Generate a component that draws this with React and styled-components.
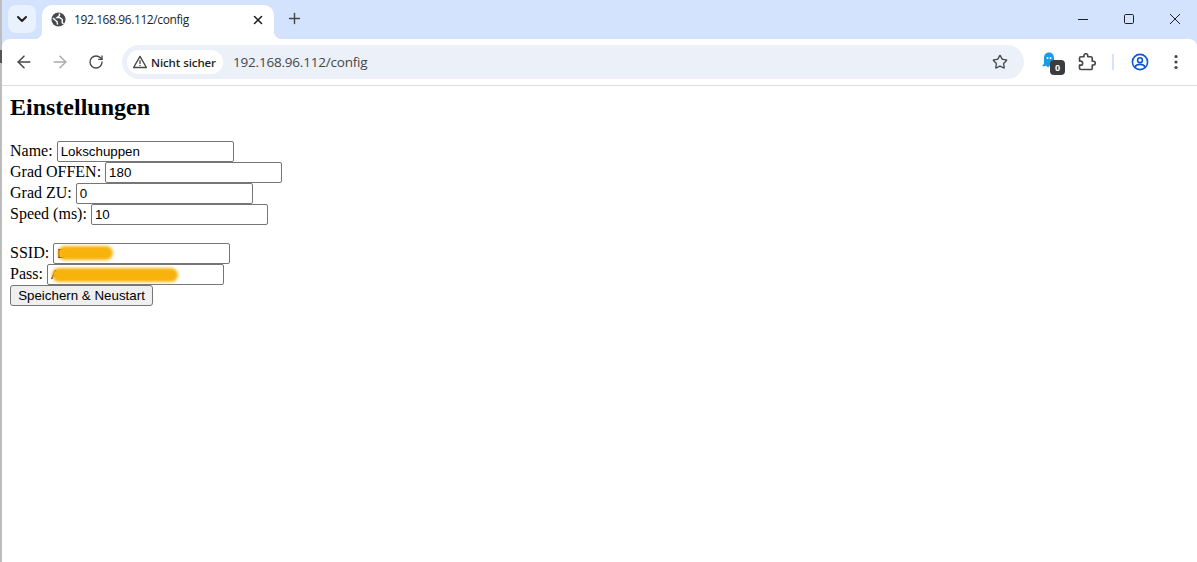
import styled, { createGlobalStyle } from "styled-components";
import { ArrowLeft, ArrowRight, RotateCw, ChevronDown, X, Plus, Star } from "lucide-react";

const GlobalStyle = createGlobalStyle`
  html, body {
    margin: 0;
    height: 100%;
    background: #fff;
    overflow: hidden;
  }
  #root {
    height: 100%;
  }
`;

const Window = styled.div`
  position: relative;
  height: 562px;
  box-sizing: border-box;
  display: flex;
  flex-direction: column;
  background: #d3e3fd;
  border-left: 2px solid #bdbdbd;
  font-family: "Open Sans", "Noto Sans", sans-serif;
  color: #1f1f1f;

  &::before {
    content: "";
    position: absolute;
    left: -2px;
    top: 50px;
    width: 2px;
    height: 13px;
    background: #555;
  }
`;

const TabStrip = styled.div`
  height: 39px;
  flex: none;
  display: flex;
  align-items: flex-end;
  padding-left: 6px;
`;

const TabSearch = styled.button`
  width: 28px;
  height: 28px;
  margin: 0 6px 6px 0;
  padding: 0;
  border: none;
  border-radius: 8px;
  background: #e9f1fe;
  color: #1f1f1f;
  display: flex;
  align-items: center;
  justify-content: center;
`;

const Tab = styled.div`
  position: relative;
  width: 232px;
  height: 34px;
  box-sizing: border-box;
  padding: 0 9px 5px;
  background: #fff;
  border-radius: 10px 10px 0 0;
  display: flex;
  align-items: center;
  gap: 8px;

  &::before,
  &::after {
    content: "";
    position: absolute;
    bottom: 0;
    width: 8px;
    height: 8px;
  }
  &::before {
    left: -8px;
    background: radial-gradient(circle at 0 0, #d3e3fd 8px, #fff 8.5px);
  }
  &::after {
    right: -8px;
    background: radial-gradient(circle at 100% 0, #d3e3fd 8px, #fff 8.5px);
  }
`;

const TabTitle = styled.span`
  flex: 1;
  font-size: 12px;
  letter-spacing: -0.4px;
  white-space: nowrap;
`;

const TabClose = styled.span`
  display: flex;
  color: #1f1f1f;
`;

const NewTab = styled.span`
  margin: 0 0 12px 12px;
  display: flex;
  color: #444746;
`;

const WindowControls = styled.div`
  margin-left: auto;
  align-self: flex-start;
  padding: 13px 16px 0 0;
  display: flex;
  align-items: center;
  gap: 34px;
  color: #1f1f1f;
`;

const Toolbar = styled.div`
  height: 46px;
  flex: none;
  box-sizing: border-box;
  padding: 6px 0 6px 10px;
  background: #fff;
  border-radius: 8px 8px 0 0;
  display: flex;
  align-items: center;
`;

const NavButton = styled.span`
  width: 24px;
  height: 24px;
  margin-right: 12px;
  display: flex;
  align-items: center;
  justify-content: center;
  color: ${(p) => (p.$disabled ? "#a9abad" : "#474747")};
`;

const Omnibox = styled.div`
  width: 902px;
  height: 34px;
  box-sizing: border-box;
  margin-left: 2px;
  padding: 0 16px 0 5px;
  border-radius: 17px;
  background: #ecf1f9;
  display: flex;
  align-items: center;
`;

const SecurityChip = styled.div`
  width: 96px;
  height: 24px;
  box-sizing: border-box;
  padding-left: 5px;
  border-radius: 12px;
  background: #fff;
  display: flex;
  align-items: center;
  gap: 3px;
  font-size: 11.5px;
  font-weight: 600;
  letter-spacing: -0.1px;
  white-space: nowrap;
`;

const Url = styled.span`
  margin-left: 10px;
  flex: 1;
  font-size: 13.5px;
  letter-spacing: -0.2px;
  color: #444746;
`;

const Extensions = styled.div`
  flex: 1;
  display: flex;
  align-items: center;
  padding-left: 19px;
`;

const GhostSlot = styled.div`
  position: relative;
  width: 24px;
  height: 24px;
  margin-right: 11px;
`;

const Badge = styled.span`
  position: absolute;
  left: 7px;
  top: 10px;
  width: 15px;
  height: 15px;
  border-radius: 4px;
  background: #3c3c3f;
  color: #fff;
  font-size: 9px;
  font-weight: 700;
  display: flex;
  align-items: center;
  justify-content: center;
`;

const Separator = styled.span`
  width: 2px;
  height: 16px;
  margin: 0 17px 0 16px;
  background: #d3e3fd;
`;

const ToolIcon = styled.span`
  display: flex;
  margin-right: ${(p) => p.$gap ?? 0}px;
`;

const Page = styled.main`
  flex: 1;
  box-sizing: border-box;
  padding: 8px 8px 0;
  background: #fff;
  border-top: 1px solid #dcdcdc;
  color: #000;
  font-family: "Liberation Serif", "Times New Roman", serif;
  font-size: 16px;
`;

const Title = styled.h2`
  margin: 0 0 20px;
  font-size: 24px;
  line-height: 27px;
  font-weight: 700;
`;

const Fieldset = styled.div`
  margin-bottom: ${(p) => p.$gap ?? 0}px;
`;

const Row = styled.label`
  display: flex;
  align-items: flex-start;
  height: 21px;
  line-height: 19px;
  gap: 4px;
`;

const Field = styled.span`
  position: relative;
  display: flex;
`;

const Input = styled.input`
  width: 177px;
  height: 21px;
  box-sizing: border-box;
  padding: 1px 3px;
  border: 1px solid #767676;
  border-radius: 2px;
  background: #fff;
  color: #000;
  font-family: "Liberation Sans", Arial, sans-serif;
  font-size: 13.33px;
`;

const Scribble = styled.span`
  position: absolute;
  left: ${(p) => p.$left}px;
  top: ${(p) => p.$top}px;
  width: ${(p) => p.$width}px;
  height: ${(p) => p.$height}px;
  border-radius: 7px;
  background: #f7b30c;
  filter: blur(1.5px);
`;

const SaveButton = styled.button`
  display: block;
  width: 143px;
  height: 21px;
  box-sizing: border-box;
  padding: 1px 6px;
  border: 1px solid #767676;
  border-radius: 3px;
  background: #efefef;
  color: #000;
  font-family: "Liberation Sans", Arial, sans-serif;
  font-size: 13.33px;
  white-space: nowrap;
`;

function GlobeIcon() {
  return (
    <svg width="15" height="15" viewBox="0 0 16 16">
      <circle cx="8" cy="8" r="7.5" fill="#474a4d" />
      <path
        d="M2 6.5 6.5 10.5 7 13.5M9 1.5V4L6.5 6H9.5L12 8V11.5L13.5 12.5"
        fill="none"
        stroke="#fff"
        strokeWidth="1.5"
      />
    </svg>
  );
}

function WarningIcon() {
  return (
    <svg width="16" height="16" viewBox="0 0 16 16">
      <path d="M8 2.4 14.4 13.5H1.6Z" fill="none" stroke="#474747" strokeWidth="1.4" strokeLinejoin="round" />
      <path d="M8 6.3V10M8 10.9V12" stroke="#474747" strokeWidth="1.3" />
    </svg>
  );
}

function GhostIcon() {
  return (
    <svg width="14" height="17" viewBox="0 0 14 16" style={{ position: "absolute", left: -1, top: 2 }}>
      <path
        d="M7 0C3.5 0 2 2.6 2 5.5V10C2 11.5 1 12.5 0 13.5 1.5 14 3 14 4 13L6 15 8 13 10 15 12 13V5.5C12 2.6 10.5 0 7 0Z"
        fill="#1a9be6"
      />
      <circle cx="5.5" cy="5.5" r="1" fill="#fff" />
      <circle cx="8.5" cy="5.5" r="1" fill="#fff" />
    </svg>
  );
}

function PuzzleIcon() {
  return (
    <svg width="18" height="18" viewBox="0 0 24 24" fill="none" stroke="#474747" strokeWidth="2.2" strokeLinejoin="round">
      <path d="M20.5 11H19V7c0-1.1-.9-2-2-2h-4V3.5C13 2.12 11.88 1 10.5 1S8 2.12 8 3.5V5H4c-1.1 0-1.99.9-1.99 2v3.8H3.5c1.49 0 2.7 1.21 2.7 2.7s-1.21 2.7-2.7 2.7H2V20c0 1.1.9 2 2 2h14c.6 0 1-.4 1-2v-4h1.5c1.38 0 2.5-1.12 2.5-2.5S21.88 11 20.5 11z" />
    </svg>
  );
}

function ProfileIcon() {
  return (
    <svg width="18" height="18" viewBox="0 0 18 18" fill="none" stroke="#0b57d0" strokeWidth="1.6">
      <circle cx="9" cy="9" r="7.6" />
      <circle cx="9" cy="7.2" r="2.4" />
      <path d="M3.8 14C5 11.8 7 11.4 9 11.4S13 11.8 14.2 14" />
    </svg>
  );
}

function MenuIcon() {
  return (
    <svg width="16" height="16" viewBox="0 0 16 16" fill="#474747">
      <circle cx="8" cy="2.5" r="1.6" />
      <circle cx="8" cy="8" r="1.6" />
      <circle cx="8" cy="13.5" r="1.6" />
    </svg>
  );
}

function MinimizeIcon() {
  return (
    <svg width="12" height="12" viewBox="0 0 12 12">
      <path d="M1 6.5H11" stroke="#1f1f1f" />
    </svg>
  );
}

function MaximizeIcon() {
  return (
    <svg width="12" height="12" viewBox="0 0 12 12">
      <rect x="1.5" y="1.5" width="9" height="9" rx="1.2" fill="none" stroke="#1f1f1f" />
    </svg>
  );
}

function CloseWindowIcon() {
  return (
    <svg width="12" height="12" viewBox="0 0 12 12">
      <path d="M1 1 11 11M11 1 1 11" stroke="#1f1f1f" />
    </svg>
  );
}

export default function App() {
  return (
    <Window>
      <GlobalStyle />
      <TabStrip>
        <TabSearch>
          <ChevronDown size={16} strokeWidth={3} />
        </TabSearch>
        <Tab>
          <GlobeIcon />
          <TabTitle>192.168.96.112/config</TabTitle>
          <TabClose>
            <X size={14} strokeWidth={2.6} />
          </TabClose>
        </Tab>
        <NewTab>
          <Plus size={17} strokeWidth={2} />
        </NewTab>
        <WindowControls>
          <MinimizeIcon />
          <MaximizeIcon />
          <CloseWindowIcon />
        </WindowControls>
      </TabStrip>

      <Toolbar>
        <NavButton>
          <ArrowLeft size={20} strokeWidth={1.8} />
        </NavButton>
        <NavButton $disabled>
          <ArrowRight size={20} strokeWidth={1.8} />
        </NavButton>
        <NavButton>
          <RotateCw size={16} strokeWidth={2} />
        </NavButton>
        <Omnibox>
          <SecurityChip>
            <WarningIcon />
            Nicht sicher
          </SecurityChip>
          <Url>192.168.96.112/config</Url>
          <Star size={16} strokeWidth={2} color="#474747" />
        </Omnibox>
        <Extensions>
          <GhostSlot>
            <GhostIcon />
            <Badge>0</Badge>
          </GhostSlot>
          <ToolIcon>
            <PuzzleIcon />
          </ToolIcon>
          <Separator />
          <ToolIcon $gap={19}>
            <ProfileIcon />
          </ToolIcon>
          <ToolIcon>
            <MenuIcon />
          </ToolIcon>
        </Extensions>
      </Toolbar>

      <Page>
        <Title>Einstellungen</Title>
        <form>
          <Fieldset $gap={18}>
            <Row>
              Name: <Input defaultValue="Lokschuppen" />
            </Row>
            <Row>
              Grad OFFEN: <Input defaultValue="180" />
            </Row>
            <Row>
              Grad ZU: <Input defaultValue="0" />
            </Row>
            <Row>
              Speed (ms): <Input defaultValue="10" />
            </Row>
          </Fieldset>
          <Fieldset>
            <Row>
              SSID:{" "}
              <Field>
                <Input defaultValue="D" />
                <Scribble $left={5} $top={3} $width={55} $height={14} />
              </Field>
            </Row>
            <Row>
              Pass:{" "}
              <Field>
                <Input defaultValue="A" />
                <Scribble $left={5} $top={4} $width={126} $height={14} />
              </Field>
            </Row>
          </Fieldset>
          <SaveButton type="button">Speichern &amp; Neustart</SaveButton>
        </form>
      </Page>
    </Window>
  );
}
